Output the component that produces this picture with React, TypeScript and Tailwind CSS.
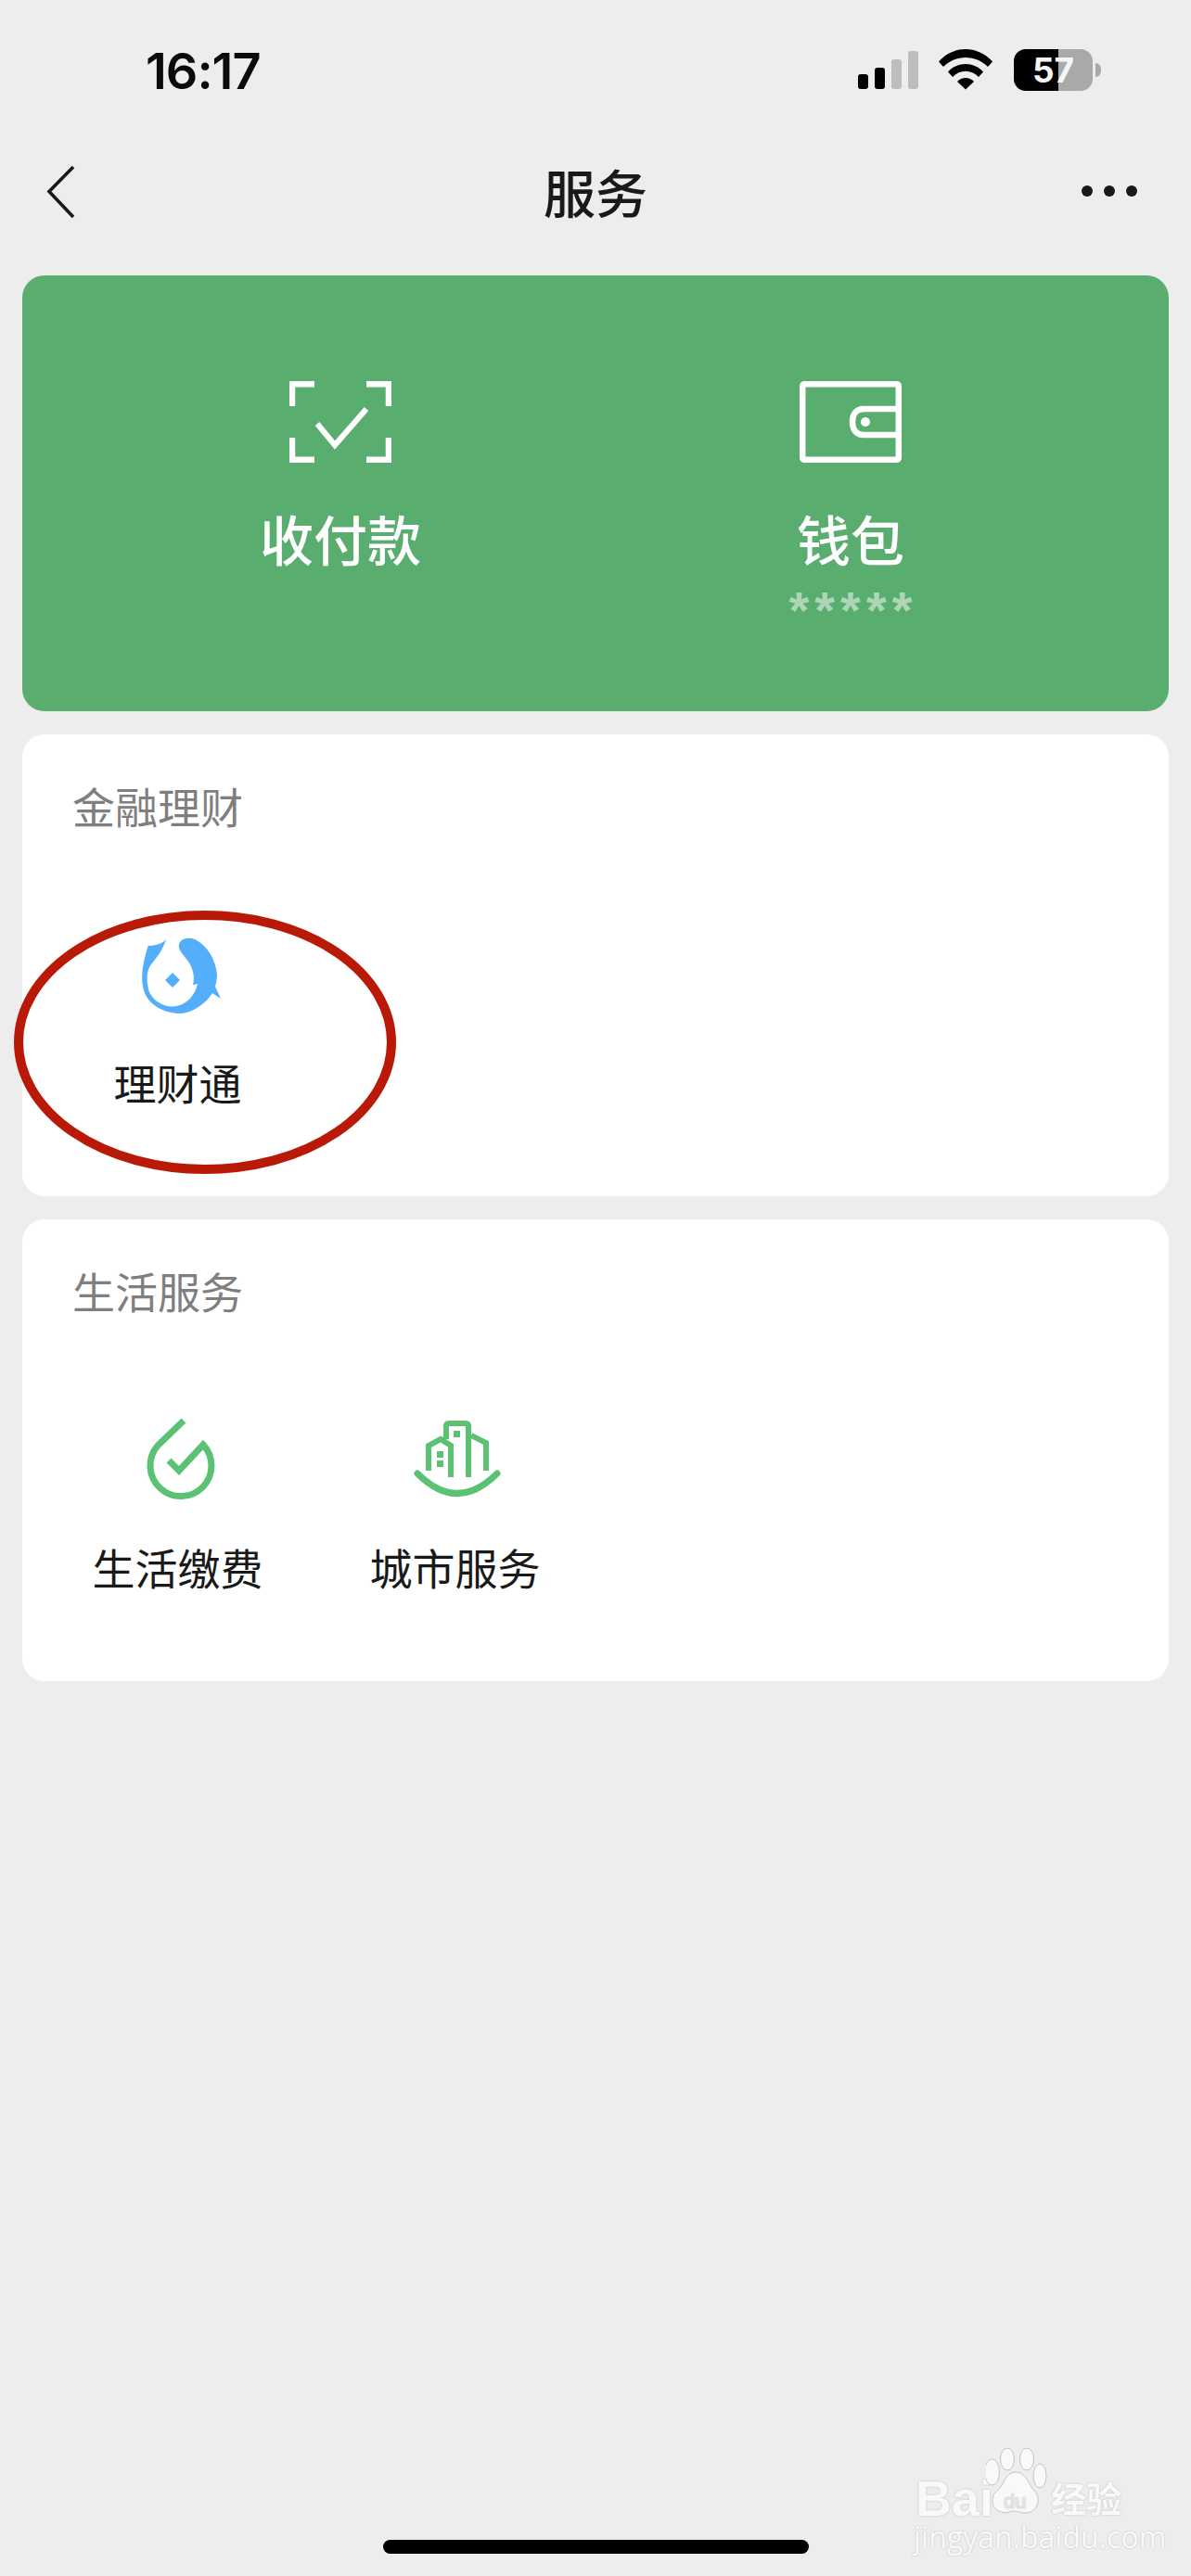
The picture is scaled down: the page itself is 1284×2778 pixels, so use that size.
const cjk = "font-['Noto_Sans_CJK_SC','Noto_Sans',sans-serif]";

function ScanIcon() {
  return (
    <svg width="110" height="88" viewBox="0 0 110 88" fill="none" stroke="#fff" strokeWidth="6.5" className="block">
      <path d="M3 27V3.200H27" />
      <path d="M83 3.200H107V27" />
      <path d="M3 61V84.800H27" />
      <path d="M83 84.800H107V61" />
      <path d="M30 46L49 69L83 30" strokeWidth="6" />
    </svg>
  );
}

function WalletIcon() {
  return (
    <svg width="110" height="88" viewBox="0 0 110 88" fill="none" stroke="#fff" strokeWidth="6.500" className="block">
      <rect x="3.200" y="3.200" width="103.600" height="81.600" rx="2" />
      <path d="M107 30H69C60 30 57 37 57 44C57 51 60 58 69 58H107" />
      <circle cx="71" cy="44" r="5" fill="#fff" stroke="none" />
    </svg>
  );
}

function FishIcon() {
  return (
    <svg width="120" height="120" viewBox="0 -13 120 120" className="block">
      <path
        fill="#55AEFB"
        d="M47 13C44 24 36 34 31 40C25 48 26 60 29 70C35 82 48 87 58 85C69 83 78 74 81 61L76 62C79 50 74 40 68 33C62 26 59 21 62 16C65 11 73 11 78 13C91 19 100 34 102 50C102 56 101 60 100 64L106 77L97 71C90 82 76 92 63 93C45 93 28 84 23 68C19 54 22 38 27.700 20C35 20 43 18 47 13Z"
      />
      <path fill="#55AEFB" d="M54 49L62 57L54 65L46 57Z" />
    </svg>
  );
}

function DropIcon() {
  return (
    <svg width="120" height="120" viewBox="0 0 120 120" fill="none" stroke="#5BC274" strokeWidth="7" className="block">
      <path d="M66 22L38 49A33 33 0 1 0 87 48L61 76L50 65" />
    </svg>
  );
}

function CityIcon() {
  return (
    <svg width="120" height="120" viewBox="0 0 120 120" fill="none" stroke="#5BC274" strokeWidth="6" className="block">
      <path d="M19 79Q62 122 105 79" strokeWidth="7" strokeLinecap="round" />
      <path d="M50 42V28Q50 25 53 25H71Q74 25 74 28V83" />
      <path d="M31 76V49L44 42L55 49V83" />
      <path d="M77 38L93 46V76" />
      <rect x="58" y="33" width="7" height="7" fill="#5BC274" stroke="none" />
      <rect x="40" y="55" width="7" height="7" fill="#5BC274" stroke="none" />
      <rect x="40" y="65" width="7" height="7" fill="#5BC274" stroke="none" />
    </svg>
  );
}

function StatusBar() {
  return (
    <div className="h-[150px] pl-[157px] pr-[97px] flex items-start justify-between">
      <div className="mt-[47px] text-[54px] leading-[60px] font-semibold tracking-[-1px] text-[#0a0a0a] font-['Inter',sans-serif]">
        16:17
      </div>
      <div className="mt-[53px] flex items-start">
        <div className="flex items-end gap-[7px] h-[43px]">
          <div className="w-[11px] h-[16px] rounded-[3px] bg-black" />
          <div className="w-[11px] h-[23px] rounded-[3px] bg-black" />
          <div className="w-[11px] h-[32px] rounded-[3px] bg-[#bdbdbd]" />
          <div className="w-[11px] h-[41px] rounded-[3px] bg-[#bdbdbd]" />
        </div>
        <svg width="58" height="44" viewBox="0 0 58 44" className="ml-[22px] block">
          <path d="M0 13.500C16 -4.500 42 -4.500 58 13.500L53 19C40 5.500 18 5.500 5 19Z" fill="#000" />
          <path d="M10 24.500C20 13 38 13 48 24.500L43 30C35 21.500 23 21.500 15 30Z" fill="#000" />
          <path d="M20 35C25 29.500 33 29.500 38 35L29 43.500Z" fill="#000" />
        </svg>
        <div className="ml-[23px] relative w-[85px] h-[45px] rounded-[13px] bg-[#a9a9a9] overflow-hidden flex items-center justify-center">
          <div className="absolute left-0 top-0 bottom-0 w-[48px] bg-black" />
          <span className="relative text-[37px] leading-[45px] font-bold text-[#f5f5f5] font-['Inter',sans-serif]">57</span>
        </div>
        <div className="ml-[3px] mt-[15px] w-[6px] h-[15px] rounded-r-[6px] bg-[#a9a9a9]" />
      </div>
    </div>
  );
}

function NavBar() {
  return (
    <div className="h-[147px] relative flex items-start justify-between pl-[49px] pr-[58px]">
      <svg width="32" height="58" viewBox="0 0 32 58" fill="none" stroke="#191919" strokeWidth="3.600" className="mt-[28px] block">
        <path d="M30 2L4 28.500L30 56" />
      </svg>
      <div className={`${cjk} absolute left-0 right-0 top-[24px] text-center text-[56px] leading-[64px] font-medium text-[#191919]`}>
        服务
      </div>
      <div className="mt-[50px] flex gap-[12px]">
        <div className="w-[12px] h-[12px] rounded-full bg-[#191919]" />
        <div className="w-[12px] h-[12px] rounded-full bg-[#191919]" />
        <div className="w-[12px] h-[12px] rounded-full bg-[#191919]" />
      </div>
    </div>
  );
}

function GreenCard() {
  return (
    <div className={`${cjk} h-[470px] rounded-[24px] bg-[#58AD6F] px-[68px] pt-[114px] grid grid-cols-2 text-white`}>
      <div className="flex flex-col items-center">
        <ScanIcon />
        <div className="mt-[48px] text-[58px] leading-[66px] font-medium">收付款</div>
      </div>
      <div className="flex flex-col items-center">
        <WalletIcon />
        <div className="mt-[48px] text-[58px] leading-[66px] font-medium">钱包</div>
        <div className="mt-[20px] pl-[6px] text-[56px] leading-[50px] font-bold tracking-[6px] text-white/50 font-['Liberation_Sans',sans-serif]">
          *****
        </div>
      </div>
    </div>
  );
}

function Item({ icon, label }: { icon: React.ReactNode; label: string }) {
  return (
    <div className="w-[299px] flex flex-col items-center">
      {icon}
      <div className="mt-[31px] text-[46px] leading-[56px] text-[#191919]">{label}</div>
    </div>
  );
}

function Section({ title, children }: { title: string; children: React.ReactNode }) {
  return (
    <div className={`${cjk} h-[498px] rounded-[24px] bg-white pt-[48px]`}>
      <div className="pl-[54px] text-[46px] leading-[56px] text-[#7f7f7f]">{title}</div>
      <div className="mt-[91px] pl-[18px] flex">{children}</div>
    </div>
  );
}

function Watermark() {
  return (
    <div className="absolute left-[985px] top-[2640px] w-[234px] h-[112px] text-[#f9f9f9] [text-shadow:0_0_2px_#b5b5b5]">
      <div className="absolute left-[2px] top-[26px] text-[54px] leading-[56px] font-bold font-['Liberation_Sans',sans-serif]">Bai</div>
      <svg width="66" height="76" viewBox="0 0 66 76" className="absolute left-[78px] top-0" fill="#f9f9f9" stroke="#c4c4c4" strokeWidth="1">
        <ellipse cx="6.500" cy="26" rx="8" ry="14" />
        <ellipse cx="23" cy="12" rx="7.500" ry="12" />
        <ellipse cx="44" cy="12" rx="7.500" ry="12" />
        <ellipse cx="58" cy="30" rx="7" ry="13" />
        <path d="M32 26C44 26 46 40 52 46C60 54 56 70 42 70C36 70 36 68 30 68C24 68 22 72 14 68C4 64 6 50 12 46C20 40 20 26 32 26Z" />
      </svg>
      <div className="absolute left-[97px] top-[46px] text-[22px] leading-[24px] text-[#e4e4e4] font-['Liberation_Sans',sans-serif]">du</div>
      <div className={`${cjk} absolute left-[148px] top-[30px] text-[38px] leading-[46px] font-bold tracking-[0px]`}>经验</div>
      <div className="absolute left-0 top-[78px] w-[232px] text-center text-[32px] leading-[36px] font-['Open_Sans',sans-serif]">jingyan.baidu.com</div>
    </div>
  );
}

export default function App() {
  return (
    <div className="relative w-[1284px] h-[2778px] bg-[#EDEDED] overflow-hidden flex flex-col">
      <StatusBar />
      <NavBar />
      <div className="px-[24px] flex flex-col gap-[25px]">
        <GreenCard />
        <Section title="金融理财">
          <Item icon={<FishIcon />} label="理财通" />
        </Section>
        <Section title="生活服务">
          <Item icon={<DropIcon />} label="生活缴费" />
          <Item icon={<CityIcon />} label="城市服务" />
        </Section>
      </div>
      <div className="mt-auto mb-[24px] mx-auto w-[459px] h-[15px] rounded-full bg-black" />
      <svg width="412" height="284" viewBox="0 0 412 284" fill="none" className="absolute left-[15px] top-[982px]">
        <ellipse cx="206" cy="142" rx="201" ry="137" stroke="#B91A08" strokeWidth="10" />
      </svg>
      <Watermark />
    </div>
  );
}
